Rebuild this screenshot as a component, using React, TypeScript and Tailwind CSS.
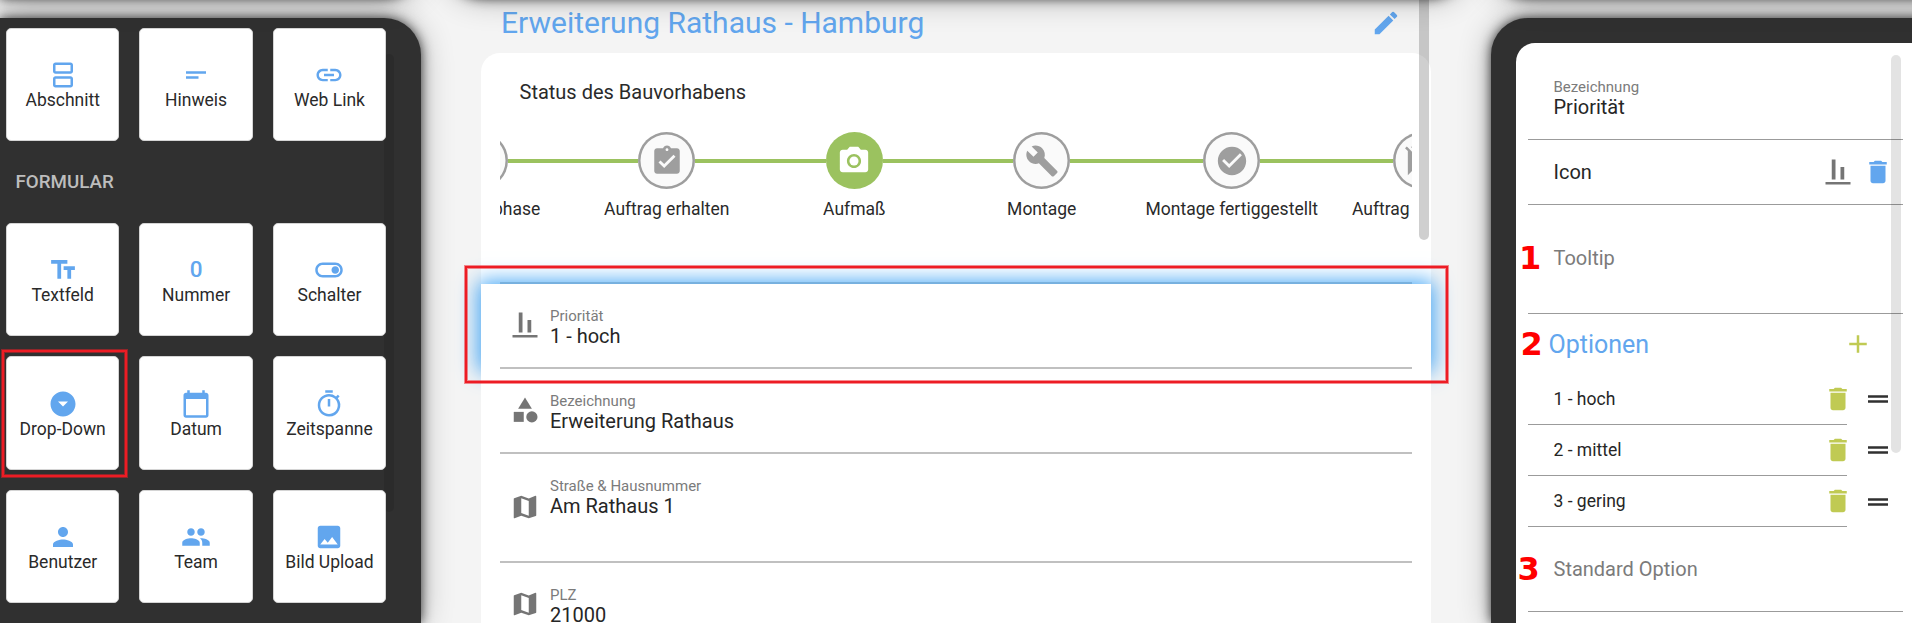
import React from "react";
import type { IconType } from "react-icons";
import {
  MdAdd,
  MdAlignVerticalBottom,
  MdArrowDropDownCircle,
  MdAssignment,
  MdAssignmentTurnedIn,
  MdBuild,
  MdCalendarToday,
  MdCameraAlt,
  MdCategory,
  MdCheckCircle,
  MdDelete,
  MdDragHandle,
  MdEdit,
  MdImage,
  MdLink,
  MdMap,
  MdOutlineSplitscreen,
  MdOutlineTimer,
  MdOutlineToggleOn,
  MdPeople,
  MdPerson,
  MdShortText,
  MdSpeakerNotesOff,
  MdTextFields,
} from "react-icons/md";

type Tile = { label: string; icon: IconType; marked?: boolean };

const ZeroIcon: IconType = ({ className }) => (
  <span className={`text-center text-[22.5px] leading-[29px] font-medium ${className}`}>0</span>
);

const layoutTiles: Tile[] = [
  { label: "Abschnitt", icon: MdOutlineSplitscreen },
  { label: "Hinweis", icon: MdShortText },
  { label: "Web Link", icon: MdLink },
];

const formTiles: Tile[] = [
  { label: "Textfeld", icon: MdTextFields },
  { label: "Nummer", icon: ZeroIcon },
  { label: "Schalter", icon: MdOutlineToggleOn },
  { label: "Drop-Down", icon: MdArrowDropDownCircle, marked: true },
  { label: "Datum", icon: MdCalendarToday },
  { label: "Zeitspanne", icon: MdOutlineTimer },
  { label: "Benutzer", icon: MdPerson },
  { label: "Team", icon: MdPeople },
  { label: "Bild Upload", icon: MdImage },
];

const steps: { label: string; icon: IconType; active?: boolean; wide?: boolean }[] = [
  { label: "Angebotsphase", icon: MdAssignment },
  { label: "Auftrag erhalten", icon: MdAssignmentTurnedIn },
  { label: "Aufmaß", icon: MdCameraAlt, active: true },
  { label: "Montage", icon: MdBuild },
  { label: "Montage fertiggestellt", icon: MdCheckCircle, wide: true },
  { label: "Auftrag berechnet", icon: MdSpeakerNotesOff },
];

const markFrame =
  "pointer-events-none absolute border-2 border-[#ed1c24] shadow-[0_0_0_1px_rgba(237,28,36,0.5),inset_0_0_0_1px_rgba(237,28,36,0.5)]";

const panelShadow = "shadow-[0_0_12px_rgba(0,0,0,0.75),0_0_32px_rgba(0,0,0,0.3)]";

function TileGrid({ tiles }: { tiles: Tile[] }) {
  return (
    <div className="grid grid-cols-[repeat(3,113.4px)] gap-5">
      {tiles.map(({ label, icon: Icon, marked }) => (
        <div
          key={label}
          className="relative z-10 flex h-[113.4px] flex-col items-center justify-center rounded-[5px] border border-[#d4d4d4] bg-white pt-[2.5px]"
        >
          <Icon className="size-[30px] text-[#62a6ee]" />
          <span className="text-[17.5px] leading-[21px] whitespace-nowrap text-[#2a2a2a]">{label}</span>
          {marked && <div className={`${markFrame} -top-[7px] -right-[9px] -bottom-[8px] -left-[5px]`} />}
        </div>
      ))}
    </div>
  );
}

function Palette() {
  return (
    <aside
      className={`relative mt-[17.5px] w-[421px] shrink-0 rounded-tr-[37px] bg-[#303030] pt-[10px] pl-[6px] ${panelShadow}`}
    >
      <TileGrid tiles={layoutTiles} />
      <h2 className="mt-[31.5px] mb-[30.5px] pl-[9.5px] text-[18.75px] leading-5 font-medium text-[#bdbdbd]">
        FORMULAR
      </h2>
      <TileGrid tiles={formTiles} />
      <div className="absolute top-[36px] left-[384px] h-[458px] w-[9.5px] rounded-full bg-black/10" />
    </aside>
  );
}

function Stepper() {
  return (
    <div className="mx-[19px] flex overflow-hidden">
      <div className="-ml-[114.5px] flex shrink-0">
        {steps.map(({ label, icon: Icon, active, wide }, i) => (
          <div key={i} className={`flex shrink-0 flex-col items-center ${wide ? "w-[192.5px]" : "w-[187.5px]"}`}>
            <div className="flex w-full items-center">
              <div className="h-[4px] grow bg-[#9bc25f]" />
              <div
                className={
                  active
                    ? "flex size-[57px] items-center justify-center rounded-full bg-[#9bc25f] text-white"
                    : "flex size-[57px] items-center justify-center rounded-full bg-[#fafafa] text-[#9e9e9e] shadow-[inset_0_0_0_2.5px_#9e9e9e]"
                }
              >
                <Icon className="size-[34px]" />
              </div>
              <div className="h-[4px] grow bg-[#9bc25f]" />
            </div>
            <span className="mt-[10px] text-[17.5px] leading-5 whitespace-nowrap text-[#2a2a2a]">{label}</span>
          </div>
        ))}
      </div>
    </div>
  );
}

function FormRow(props: {
  icon: IconType;
  label: string;
  value: string;
  height: string;
  iconTop: string;
  selected?: boolean;
}) {
  const Icon = props.icon;
  return (
    <div
      className={`relative flex bg-white pl-[29px] ${props.height} ${
        props.selected ? "shadow-[0_0_20px_3px_rgba(66,165,245,1)]" : ""
      }`}
    >
      <Icon className={`size-[30px] shrink-0 text-[#757575] ${props.iconTop}`} />
      <div className="flex flex-col pt-[23px] pl-[10px]">
        <span className="text-[15px] leading-[18px] text-[#7b7b7b]">{props.label}</span>
        <span className="-mt-px text-[20px] leading-6 text-[#262626]">{props.value}</span>
      </div>
      <div className="absolute right-[19px] bottom-0 left-[19px] h-[2px] bg-[#c0c0c0]" />
    </div>
  );
}

function ProjectForm() {
  return (
    <main className="relative ml-[60px] w-[950px] shrink-0">
      <header className="flex h-[52.5px] items-start justify-between pt-[5px] pr-[30px] pl-[20px]">
        <h1 className="text-[30px] leading-9 whitespace-nowrap text-[#62a6ee]">Erweiterung Rathaus - Hamburg</h1>
        <MdEdit className="mt-[3px] size-[30px] text-[#62a6ee]" />
      </header>
      <section className="h-[620px] rounded-t-[19px] bg-white pt-[27.5px]">
        <h2 className="mb-[28px] pl-[38.5px] text-[20px] leading-6 text-[#2a2a2a]">Status des Bauvorhabens</h2>
        <Stepper />
        <div className="relative mt-[63px]">
          <div className="mx-[19px] h-[2px] bg-[#c0c0c0]" />
          <FormRow
            icon={MdAlignVerticalBottom}
            label="Priorität"
            value="1 - hoch"
            height="h-[84.5px]"
            iconTop="mt-[25.5px]"
            selected
          />
          <FormRow icon={MdCategory} label="Bezeichnung" value="Erweiterung Rathaus" height="h-[85px]" iconTop="mt-[26px]" />
          <FormRow icon={MdMap} label="Straße & Hausnummer" value="Am Rathaus 1" height="h-[109px]" iconTop="mt-[38.5px]" />
          <FormRow icon={MdMap} label="PLZ" value="21000" height="h-[109px]" iconTop="mt-[26.5px]" />
          <div className={`${markFrame} -top-[16px] -right-[17px] -left-[16px] h-[117px]`} />
        </div>
      </section>
      <div className="absolute -top-3 right-[2.5px] h-[252px] w-[10px] rounded-full bg-black/19" />
    </main>
  );
}

function Marker({ n, className }: { n: number; className: string }) {
  return (
    <span
      className={`absolute font-['DejaVu_Sans'] text-[32px] leading-8 font-bold text-[#ff0000] ${className}`}
    >
      {n}
    </span>
  );
}

function Inspector() {
  const options = ["1 - hoch", "2 - mittel", "3 - gering"];
  return (
    <aside
      className={`mt-[17.5px] ml-[60px] w-[460px] shrink-0 rounded-tl-[37px] bg-[#303030] pt-[25px] pl-[25px] ${panelShadow}`}
    >
      <div className="relative h-[620px] rounded-tl-[19px] bg-white pl-[12px]">
        <div className="w-[375px] text-[20px] leading-6 text-[#262626]">
          <div className="flex h-[97.5px] flex-col border-b border-[#9b9b9b] pt-[35.5px] pl-[25.5px]">
            <span className="text-[15px] leading-[18px] text-[#7b7b7b]">Bezeichnung</span>
            <span className="-mt-px">Priorität</span>
          </div>
          <div className="flex h-[65px] items-center border-b border-[#9b9b9b] pr-[10px] pl-[25.5px]">
            <span className="grow">Icon</span>
            <MdAlignVerticalBottom className="size-[30px] text-[#757575]" />
            <MdDelete className="ml-[10.5px] size-[30px] text-[#62a6ee]" />
          </div>
          <div className="relative flex h-[108.5px] items-center border-b border-[#9b9b9b] pb-[2px] pl-[25.5px] text-[#7b7b7b]">
            Tooltip
            <Marker n={1} className="top-[36.5px] -left-[9px]" />
          </div>
          <div className="relative flex h-[60px] items-center justify-between pr-[30px] pl-[20.5px]">
            <h2 className="pt-[2px] text-[25px] leading-[30px] text-[#62a6ee]">Optionen</h2>
            <MdAdd className="size-[30px] text-[#c0ca53]" />
            <Marker n={2} className="top-[14px] -left-[7.5px]" />
          </div>
          {options.map((o) => (
            <div key={o} className="flex h-[51.3px] items-center">
              <div className="flex h-full w-[319px] items-center border-b border-[#9b9b9b] pl-[25.5px]">
                <span className="grow text-[17.5px]">{o}</span>
                <MdDelete className="-mr-[6px] size-[30px] text-[#c0ca53]" />
              </div>
              <MdDragHandle className="ml-[16px] size-[30px] text-[#303030]" />
            </div>
          ))}
          <div className="relative flex h-[84.5px] items-center border-b border-[#9b9b9b] pb-px pl-[25.5px] text-[#7b7b7b]">
            Standard Option
            <Marker n={3} className="top-[26px] -left-[10.5px]" />
          </div>
        </div>
        <div className="absolute top-[12.5px] left-[375px] h-[398px] w-[10px] rounded-full bg-black/11" />
      </div>
    </aside>
  );
}

export default function App() {
  return (
    <div className="relative flex h-[623px] w-[1912px] overflow-hidden bg-[#f4f4f4] font-[Roboto,sans-serif]">
      <Palette />
      <ProjectForm />
      <Inspector />
      <div className="pointer-events-none absolute inset-x-0 -top-[82px] flex h-[80px]">
        <div className={`w-[421px] shrink-0 rounded-br-[37px] ${panelShadow}`} />
        <div className={`ml-[25px] w-[1020px] shrink-0 rounded-b-[37px] ${panelShadow}`} />
        <div className={`ml-[25px] w-[460px] shrink-0 rounded-bl-[37px] ${panelShadow}`} />
      </div>
    </div>
  );
}
